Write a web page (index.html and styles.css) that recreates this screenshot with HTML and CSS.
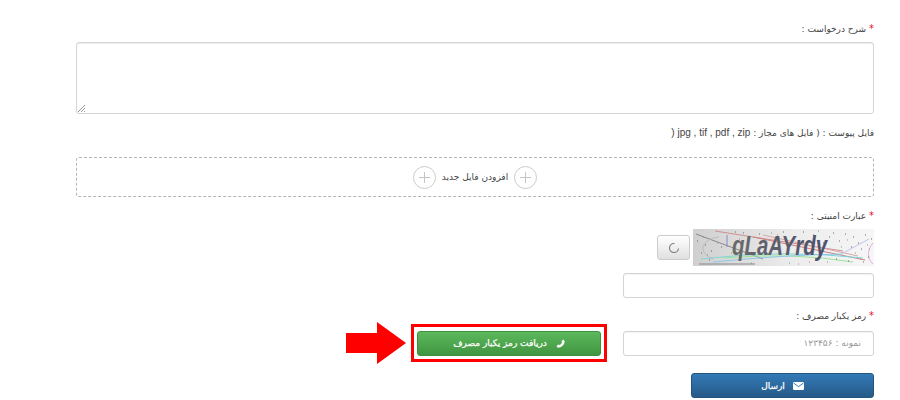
FILE: index.html
```html
<!DOCTYPE html>
<html lang="fa" dir="rtl">
<head>
<meta charset="utf-8">
<title>فرم درخواست</title>
<link rel="stylesheet" href="styles.css">
</head>
<body>
<form class="form">
  <label class="label label-desc"><span class="req">*</span> شرح درخواست :</label>
  <div class="textarea-wrap">
    <svg class="grip" width="9" height="9" viewBox="0 0 9 9"><path d="M8 1 1 8M8 4 4 8M8 7 7 8" stroke="#999" fill="none"/></svg>
  </div>
  <label class="label label-file">فایل پیوست : ( فایل های مجاز : <bdi class="latin" dir="ltr">jpg , tif , pdf , zip</bdi> <span class="latin">(</span></label>
  <div class="dropzone">
    <span class="circle"><svg width="11" height="11" viewBox="0 0 11 11"><path d="M5.5 0v11M0 5.5h11" stroke="#c4c4c4" fill="none"/></svg></span>
    <span class="drop-text">افزودن فایل جدید</span>
    <span class="circle"><svg width="11" height="11" viewBox="0 0 11 11"><path d="M5.5 0v11M0 5.5h11" stroke="#c4c4c4" fill="none"/></svg></span>
  </div>
  <label class="label label-captcha"><span class="req">*</span> عبارت امنیتی :</label>
  <div class="captcha-row">
    <svg class="captcha" width="181" height="37" viewBox="0 0 181 37">
      <defs>
        <linearGradient id="capbg" x1="0" x2="1" y1="0" y2="0"><stop offset="0" stop-color="#cfcfcf"/><stop offset=".55" stop-color="#ececec"/><stop offset="1" stop-color="#f6f6f6"/></linearGradient>
        <linearGradient id="captext" x1="0" x2="1" y1="0" y2="0"><stop offset="0" stop-color="#6a6a6a"/><stop offset="1" stop-color="#4b4f6b"/></linearGradient>
      </defs>
      <rect width="181" height="37" fill="url(#capbg)"/>
      <path d="M3 5 70 30" stroke="#888" fill="none"/>
      <path d="M22 2 150 22" stroke="#cf9090" fill="none"/>
      <path d="M60 8 172 31" stroke="#cf7f7f" fill="none"/>
      <path d="M70 6 165 27" stroke="#d8a8a8" fill="none"/>
      <path d="M8 30Q90 20 170 29" stroke="#7fd6d6" fill="none"/>
      <path d="M30 29Q100 23 160 33" stroke="#9be39b" fill="none"/>
      <path d="M20 33Q90 26 150 25" stroke="#8fc7e8" fill="none"/>
      <path d="M6 35H62" stroke="#888" fill="none"/>
      <path d="M34 6V18" stroke="#8888cc" fill="none"/>
      <path d="M150 24 176 10" stroke="#c4c4ee" fill="none"/>
      <path d="M20 30C4 24 8 10 26 8" stroke="#bbb" fill="none"/>
      <path d="M180 14C174 20 174 30 180 35" stroke="#e3b0e3" fill="none"/>
      <path d="M120 6h1M130 14h1M140 4h1M160 8h1M168 20h1M12 16h1M50 4h1M90 3h1M175 28h1M100 8h1M155 32h1M146 12h1M172 6h1M8 24h1M4 12h1M18 22h1M28 18h1M42 3h1M66 5h1M110 3h1M152 5h1M165 14h1M178 10h1M143 30h1M170 33h1M136 8h1M158 18h1M16 31h1" stroke="#666" fill="none"/>
      <path d="M10 8h1M24 14h1M38 24h1M78 4h1M125 2h1M148 18h1M162 24h1M176 20h1M134 33h1M58 34h1M96 34h1" stroke="#6aa86a" fill="none"/>
      <path d="M14 26h1M46 10h1M84 6h1M116 33h1M154 11h1M174 16h1M167 30h1M105 35h1" stroke="#c77" fill="none"/>
      <text class="captcha-text" x="39" y="26" fill="url(#captext)" textLength="95" lengthAdjust="spacingAndGlyphs" direction="ltr">qLaAYrdy</text>
    </svg>
    <button type="button" class="refresh">
      <svg width="12" height="12" viewBox="0 0 12 12"><path d="M6.5 1.5A4.5 4.5 0 1 0 10.5 6.5" stroke="#777" stroke-width="1.1" fill="none"/></svg>
    </button>
  </div>
  <div class="input input-captcha"></div>
  <label class="label label-otp"><span class="req">*</span> رمز یکبار مصرف :</label>
  <div class="otp-row">
    <div class="input input-otp">نمونه : ۱۲۳۴۵۶</div>
    <div class="highlight">
      <button type="button" class="btn btn-green">
        <svg width="9" height="9" viewBox="0 0 10 10"><path d="M8 0.6 9.6 2.4C9.6 6 6 9.6 2.2 9.6L.5 8 2.5 6 3.6 6.8C5 6.2 6.1 5 6.8 3.5L6 2.5Z" fill="#fff"/></svg>
        <span>دریافت رمز یکبار مصرف</span>
      </button>
    </div>
    <svg class="arrow" width="60" height="42" viewBox="0 0 60 42"><path d="M0 11H31V0L60 21 31 42V31H0Z" fill="#f00"/></svg>
  </div>
  <button type="button" class="btn btn-blue">
    <svg width="11" height="8" viewBox="0 0 11 8"><rect width="11" height="8" rx="1" fill="#fff"/><path d="M.5 1 5.5 4.6 10.5 1" stroke="#3a78b0" fill="none"/></svg>
    <span>ارسال</span>
  </button>
</form>
</body>
</html>
```
FILE: styles.css
```css
* { box-sizing: border-box; }
html, body { margin: 0; padding: 0; background: #fff; }
body { width: 900px; height: 400px; overflow: hidden; }
.form {
  display: flex;
  flex-direction: column;
  align-items: flex-start;
  padding: 22px 26px 0 26px;
  width: 900px;
  font-family: "DejaVu Sans", sans-serif;
  font-size: 9px;
  color: #444;
}
.label { display: block; line-height: 14px; height: 14px; }
.latin { font-family: "Liberation Sans", sans-serif; font-size: 10px; }
.req { color: #e8112d; font-size: 10px; }
.textarea-wrap {
  position: relative;
  width: 798px;
  height: 72px;
  margin-top: 6px;
  border: 1px solid #d4d4d4;
  border-radius: 3px;
  box-shadow: inset 0 1px 1px rgba(0,0,0,.07);
  background: #fff;
}
.grip { position: absolute; left: 0; bottom: 0; }
.label-file { margin-top: 12px; }
.dropzone {
  display: flex;
  justify-content: center;
  align-items: center;
  gap: 6px;
  width: 798px;
  height: 40px;
  margin-top: 17px;
  border: 1px dashed #b5b5b5;
  border-radius: 3px;
}
.circle {
  display: flex;
  align-items: center;
  justify-content: center;
  width: 23px;
  height: 23px;
  border: 1px solid #ccc;
  border-radius: 50%;
}
.drop-text { color: #444; }
.label-captcha { margin-top: 12px; }
.captcha-row { display: flex; align-items: center; gap: 3px; margin-top: 6px; height: 37px; }
.captcha { display: block; }
.captcha-text {
  font-family: "Liberation Sans", sans-serif;
  font-size: 27px;
  font-style: italic;
  font-weight: 700;
}
.refresh {
  display: flex;
  align-items: center;
  justify-content: center;
  width: 33px;
  height: 25px;
  padding: 0;
  border: 1px solid #ccc;
  border-radius: 3px;
  background: linear-gradient(#fff, #e0e0e0);
}
.input {
  width: 251px;
  height: 25px;
  border: 1px solid #d4d4d4;
  border-radius: 3px;
  background: #fff;
  box-shadow: inset 0 1px 1px rgba(0,0,0,.05);
  line-height: 23px;
  padding: 0 12px;
  color: #999;
}
.input-captcha { margin-top: 7px; }
.label-otp { margin-top: 11px; }
.otp-row { display: flex; align-items: center; gap: 5px; height: 42px; margin-top: -1px; }
.input-otp { margin-left: 11px; flex: none; }
.highlight {
  display: flex;
  align-items: center;
  justify-content: center;
  width: 196px;
  height: 38px;
  border: 3px solid #f00;
}
.arrow { display: block; }
.btn {
  display: flex;
  align-items: center;
  justify-content: center;
  height: 25px;
  padding: 0;
  border-radius: 3px;
  font-family: "DejaVu Sans", sans-serif;
  font-size: 9px;
  font-weight: 400;
  color: #fff;
  -webkit-text-stroke: .25px #fff;
}
.btn-green {
  gap: 9px;
  width: 184px;
  border: 1px solid #3e8f3e;
  background: linear-gradient(#5cb85c, #419641);
}
.btn-blue {
  gap: 8px;
  width: 183px;
  margin-top: 9px;
  border: 1px solid #245580;
  background: linear-gradient(#337ab7, #265a88);
}
```
